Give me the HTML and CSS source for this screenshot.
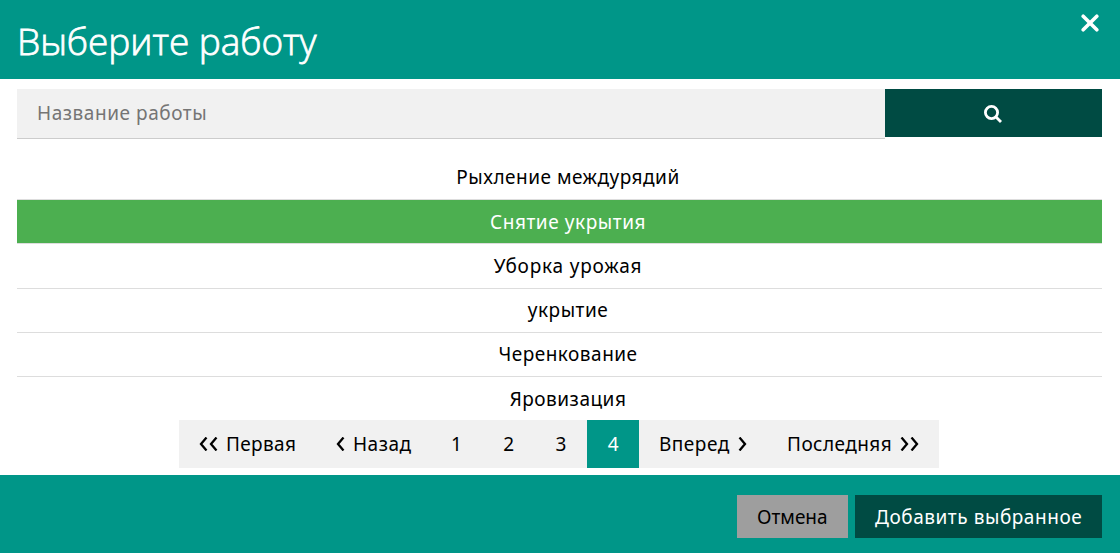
FILE: index.html
```html
<!DOCTYPE html>
<html lang="ru">
<head>
<meta charset="utf-8">
<title>Выберите работу</title>
<link rel="stylesheet" href="styles.css">
</head>
<body>
<div class="modal">
  <header class="header">
    <h1 class="title">Выберите работу</h1>
    <svg class="close" width="18" height="18" viewBox="0 0 18 18"><path d="M2.200 2.200L15.800 15.800M15.800 2.200L2.200 15.800"/></svg>
  </header>
  <main class="content">
    <div class="search">
      <div class="search-input">Название работы</div>
      <div class="search-button"><svg class="magnifier" width="19" height="19" viewBox="0 0 19 19"><circle cx="7.500" cy="8.500" r="6.100"/><path d="M11.500 12.500L17 18"/></svg></div>
    </div>
    <ul class="list">
      <li class="row">Рыхление междурядий</li>
      <li class="row selected">Снятие укрытия</li>
      <li class="row wide">Уборка урожая</li>
      <li class="row raised">укрытие</li>
      <li class="row raised">Черенкование</li>
      <li class="row">Яровизация</li>
    </ul>
    <nav class="pages">
      <div class="page first"><svg class="chevron" width="19" height="14" viewBox="0 0 19 14"><path d="M7.500 .5L2 7L7.500 13.500M17.500 .5L12 7L17.500 13.500"/></svg>Первая</div>
      <div class="page prev"><svg class="chevron" width="9" height="14" viewBox="0 0 9 14"><path d="M7.500 .5L2 7L7.500 13.500"/></svg>Назад</div>
      <div class="page num">1</div>
      <div class="page num">2</div>
      <div class="page num">3</div>
      <div class="page num current">4</div>
      <div class="page next">Вперед<svg class="chevron" width="9" height="14" viewBox="0 0 9 14"><path d="M1.500 .5L7 7L1.500 13.500"/></svg></div>
      <div class="page last">Последняя<svg class="chevron" width="19" height="14" viewBox="0 0 19 14"><path d="M1.500 .5L7 7L1.500 13.500M11.500 .5L17 7L11.500 13.500"/></svg></div>
    </nav>
  </main>
  <footer class="footer">
    <div class="button cancel">Отмена</div>
    <div class="button add">Добавить выбранное</div>
  </footer>
</div>
</body>
</html>
```
FILE: styles.css
```css
* { box-sizing: border-box; }
body { margin: 0; font: 19px/28px "Noto Sans", sans-serif; letter-spacing: .5px; color: #000; background: #fff; }
.modal { height: 553px; display: flex; flex-direction: column; overflow: hidden; }
.header { height: 79px; background: #009688; color: #fff; display: flex; justify-content: space-between; padding: 14px 21px 0 17px; }
.title { margin: 0; font: 300 37px/54px "Open Sans", sans-serif; letter-spacing: -.05px; white-space: nowrap; -webkit-text-stroke: .8px #fff; }
.close { fill: none; stroke: #fff; stroke-width: 3.6; stroke-linecap: round; }
.content { height: 396px; padding: 10px 18px 0 17px; }
.search { display: flex; height: 66px; align-items: flex-start; }
.search-input { width: 868px; height: 50px; padding: 10px 20px; background: #f1f1f1; border-bottom: 1px solid #ccc; color: #757575; letter-spacing: .55px; }
.search-button { width: 217px; height: 48px; background: #004b43; display: flex; align-items: center; justify-content: center; }
.magnifier { fill: none; stroke: #fff; stroke-width: 2.8; }
.list { list-style: none; margin: 0; padding: 0; height: 265px; }
.row { height: 44.250px; padding: 8px 0 0 17px; text-align: center; border-bottom: 1px solid #ddd; white-space: nowrap; }
.row:first-child { height: 45px; }
.row:last-child { border: 0; }
.raised { padding-top: 7px; }
.selected { background: #4caf50; color: #fff; letter-spacing: .57px; }
.wide { letter-spacing: .82px; }
.pages { display: flex; width: 760px; height: 48px; margin-left: 162px; background: #f1f1f1; }
.page { height: 48px; display: flex; align-items: center; gap: 8px; padding: 0 20px; white-space: nowrap; }
.chevron { flex: none; fill: none; stroke: #000; stroke-width: 2.3; }
.first { width: 136px; letter-spacing: .35px; }
.prev { width: 115px; padding-left: 21px; }
.num { width: 52.250px; padding: 0 0 0 1px; justify-content: center; }
.current { background: #009688; color: #fff; }
.next { width: 128px; }
.last { width: 172px; letter-spacing: .45px; }
.footer { height: 78px; background: #009688; display: flex; justify-content: flex-end; gap: 7px; padding: 20px 18px 0; }
.button { height: 43px; padding: 8px 20px; white-space: nowrap; }
.cancel { width: 111px; background: #9e9e9e; letter-spacing: 0; }
.add { width: 247px; background: #004b43; color: #fff; letter-spacing: .55px; }
```
